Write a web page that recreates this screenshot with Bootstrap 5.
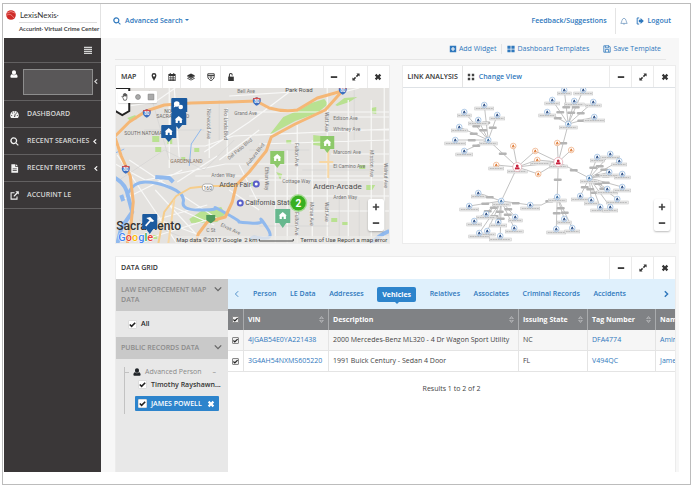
<!DOCTYPE html>
<html lang="en">
<head>
<meta charset="utf-8">
<meta name="viewport" content="width=device-width, initial-scale=1">
<title>Accurint Virtual Crime Center</title>
<link href="https://cdn.jsdelivr.net/npm/bootstrap@5.3.0/dist/css/bootstrap.min.css" rel="stylesheet">
<style>
body{font-family:"Open Sans",sans-serif;font-size:7px;line-height:10px;color:#444;background:#fff;min-height:100vh;padding:3px 4px 3px 2px}
a{color:#2f78bd;text-decoration:none}
button{background:none;border:0;padding:0;color:inherit}
svg{flex:none}
.ic{width:8px;height:8px;fill:currentColor;display:block}
.frame{border:1px solid #bcbcbc;padding:0 11px 12px 1px;flex:1}
.topbar{height:34px}
.brand{width:97px;border-right:1px solid #e2e2e2;padding:6px 0 0 2px}
.brand-name{font-family:Lato,sans-serif;font-size:8px;color:#333}
.brand-sub{font-family:Lato,sans-serif;font-size:6px;font-weight:700;color:#444;margin:2px 3px 0 13px;padding-top:1px;white-space:nowrap;border-top:1px solid #ddd}
.side{width:97px;background:#3a3738;color:#d5d5d5}
.side .item{border-bottom:1px solid #626061;height:27px;padding:0 5px 0 6px;gap:8px;color:#d5d5d5;font-weight:600;width:100%;white-space:nowrap}
.side .item .ic{width:9px;height:9px;color:#f2f2f2}
.side .ic.caret,.side .item .ic.caret{width:4px;height:5px;margin-left:auto}
.side .item .ic.caret{margin-left:-4px}
.side .item .ic.caret.far{margin-left:1px}
.side .menu-row{height:25px;padding:0 9px;border-bottom:1px solid #626061}
.side .user-row{height:38px;padding:0 3px 0 6px;border-bottom:1px solid #626061;gap:5px}
.side .user-row .ic.caret{margin-left:-4px}
.user-box{flex:1;height:26px;background:#595758;border:1px solid #8d8d8d}
.main{background:#f7f7f7;padding:0 3px 0 14px;min-width:0}
.tools{height:22px;border-bottom:1px solid #e6e6e6;margin-right:10px}
.tools a{padding:0 5px;gap:2px;font-size:7px}
.fw6{font-weight:600}
.bar-line{border-left:1px solid #e4e4e4}
.widgets{margin-top:5px}
.panel{background:#fff;border:1px solid #ececec}
.panel-head{height:22px;padding-left:5px;font-weight:600;color:#333}
.lower{margin-top:12px}
.cell{width:22px;border-left:1px solid #ebebeb;display:flex;align-items:center;justify-content:center}
.tool-cell{width:20px;border-left:1px solid #ebebeb;display:flex;align-items:center;justify-content:center}
.tool-cell.slim{width:18px}
.stage{height:155px;position:relative;overflow:hidden}
.stage>svg{width:100%;height:100%;display:block}
.zoomer{position:absolute;right:5px;bottom:12px;width:16px;background:#fff;border-radius:2px;box-shadow:0 1px 2px #0004;color:#444}
.zoomer button{height:16px;width:16px;display:flex;align-items:center;justify-content:center}
.drawbar{position:absolute;left:2px;top:3px;background:#fff;border-radius:1px;box-shadow:0 1px 1px #0002;color:#8a8a8a}
.drawbar button{width:13px;height:12px;display:flex;align-items:center;justify-content:center}
.grid-side{width:112px;background:#e8e8e8}
.sec{background:#c9c9c9;color:#8c8c8c;padding:6px 6px 6px 5px;font-weight:600;width:100%;text-align:left}
.cb.form-check-input{width:9px;height:9px;margin:0;border:1px solid #ccc;border-radius:1px;background-color:#fff;flex:none;float:none}
.cb.form-check-input:checked{background-color:#fff;border-color:#ddd;background-size:9px;background-image:url("data:image/svg+xml,%3csvg xmlns='http://www.w3.org/2000/svg' viewBox='0 0 10 10'%3e%3cpath fill='none' stroke='%23222' stroke-width='1.7' d='M2 5l2 2 4-4'/%3e%3c/svg%3e")}
.cb.tight.form-check-input{width:7px;height:7px;border-color:#888;background-size:7px;background-color:#eee}
.tree{border-left:1px solid #c2c2c2;margin:12px 9px 4px 8px;height:47px}
.tree-top{margin-top:-4px;height:10px;color:#888;padding-right:3px}
.tree-top::before{content:"";width:4px;border-top:1px solid #c2c2c2;margin-right:4px}
.leaf{margin-left:10px;padding:0 4px 0 3px;height:15px;gap:3px;color:#333;font-weight:600;white-space:nowrap}
.leaf.on{background:#2d84cc;color:#fff;border-radius:1px}
.tabs{background:#dff0fc;height:30px;padding:0 5px 0 5px}
.tabs a{font-weight:600}
.tabs .tab-on{background:#2d84cc;color:#fff;border-radius:2px;padding:3px 5px 2px;position:relative;font-weight:700}
.tab-on::after{content:"";position:absolute;left:50%;top:100%;margin-left:-2px;border:2px solid transparent;border-top-color:#2d84cc}
.tab-strip{flex:1;padding:0 36px 0 12px}
.rec{table-layout:fixed;width:530px;margin:0;border-collapse:separate;border-spacing:0}
.rec th,.rec td{height:21px;padding:0 4px;vertical-align:middle;white-space:nowrap;border-right:1px solid #e4e4e4;font-size:7px;line-height:10px}
.rec th{background:#808285;color:#fff;font-weight:700;border-right-color:#a9abad}
.rec td{border-bottom:1px solid #e4e4e4;color:#444}
.rec tr.odd td{background:#f6f6f6}
.c0{width:16px}.c1{width:85px}.c2{width:190px}.c3{width:69px}.c4{width:68px}
.sort{width:5px;height:7px;fill:#b4b6b8}
.maptxt{font-family:Roboto,sans-serif}
</style>
<script src="https://cdn.jsdelivr.net/npm/bootstrap@5.3.0/dist/js/bootstrap.bundle.min.js"></script>
</head>
<body class="d-flex flex-column">
<svg width="0" height="0" class="position-absolute" aria-hidden="true">
<symbol id="minus" viewBox="0 0 10 10"><path d="M1 4h8v2.200H1z"/></symbol>
<symbol id="plus" viewBox="0 0 10 10"><path d="M4 1h2v3h3v2H6v3H4V6H1V4h3z"/></symbol>
<symbol id="expand" viewBox="0 0 10 10"><path d="M5.500 .500h4v4L8.200 3.200 6.200 5.200 4.800 3.800 6.800 1.800zM4.500 9.500h-4v-4l1.300 1.300 2-2 1.400 1.400-2 2z"/></symbol>
<symbol id="times" viewBox="0 0 10 10"><path d="M1 3l2-2 2 2 2-2 2 2-2 2 2 2-2 2-2-2-2 2-2-2 2-2z"/></symbol>
<symbol id="user" viewBox="0 0 10 10"><path d="M5 .3c1.600 0 2.500 1.100 2.500 2.700S6.600 6 5 6 2.500 4.600 2.500 3 3.400.3 5 .3zM2.500 5.300C3.800 7 6.200 7 7.500 5.300 9 5.600 9.500 7 9.500 8.500c0 .7-.4 1.200-1.200 1.200H1.700C.9 9.700.5 9.200.5 8.500.5 7 1 5.600 2.500 5.300z"/></symbol>
<symbol id="search" viewBox="0 0 10 10"><path fill-rule="evenodd" d="M4.200.4a3.800 3.800 0 013 6.100l2.500 2.400-.9.9-2.500-2.500A3.800 3.800 0 114.200.4zm0 1.400a2.400 2.400 0 100 4.800 2.400 2.400 0 000-4.800z"/></symbol>
<symbol id="caretl" viewBox="0 0 5 6"><path d="M4 .3L1 3l3 2.700" fill="none" stroke="currentColor" stroke-width="1.500"/></symbol>
<symbol id="house" viewBox="0 0 10 10"><path d="M5 1l4.500 4h-1v4H6V6.500H4V9H1.500V5h-1z"/></symbol>
<symbol id="updown" viewBox="0 0 5 7"><path d="M2.500 0L5 3H0zM2.500 7L0 4h5zM2.500 1.200L1.500 2.400h2zM2.500 5.800l1-1.200h-2z" fill-rule="evenodd"/></symbol>
<symbol id="shield" viewBox="0 0 10 10"><path fill="#3d6fc0" d="M1 1c2 .6 2.500 0 4-.7 1.500.7 2 1.300 4 .7 1.500 4-.5 7-4 8.700C1.500 8 -.5 5 1 1z"/><path fill="#d8504c" d="M1.200 1c2 .6 2.300 0 3.800-.7C6.500 1 7 1.600 8.800 1l.4 1.700H.8z"/><text x="5" y="7" font-size="5" font-weight="700" fill="#fff" text-anchor="middle">80</text></symbol>
</svg>
<div class="frame d-flex flex-column">
  <header class="topbar d-flex">
    <div class="brand">
      <div class="d-flex align-items-center brand-name"><svg class="me-1" width="10" height="10" viewBox="0 0 10 10"><circle cx="5" cy="5" r="4.800" fill="#cf2a27"/><path d="M1 3Q5 0 9 3M.500 5.500Q4 2 8 8" stroke="#f3a09a" stroke-width=".7" fill="none"/></svg><span>LexisNexis<small>·</small></span></div>
      <div class="brand-sub">Accurint<small>·</small> Virtual Crime Center</div>
    </div>
    <div class="flex-grow-1 d-flex align-items-center justify-content-between ps-2 fw6">
      <a href="#" class="d-flex align-items-center gap-1 ms-1"><svg class="ic"><use href="#search"/></svg><span class="dropdown-toggle">Advanced Search</span></a>
      <div class="d-flex align-items-center align-self-stretch me-2">
        <a href="#" class="me-2">Feedback/Suggestions</a>
        <span class="bar-line d-block h-75 me-1"></span>
        <button type="button" aria-label="Alerts"><svg class="ic" viewBox="0 0 10 10"><path d="M1 8h8C7.500 6.500 8 2 5 1.500 2 2 2.500 6.500 1 8zM4 8.500q1 1.500 2 0" fill="none" stroke="#6a94bd" stroke-width=".9"/></svg></button>
        <a href="#" class="d-flex align-items-center gap-1 ms-2"><svg class="ic" viewBox="0 0 10 10"><path d="M4 1.200H1.500v7.600H4" fill="none" stroke="currentColor" stroke-width="1.200"/><path d="M3.500 3.500h2.200V1.200L9.800 5 5.700 8.800V6.500H3.500z"/></svg>Logout</a>
      </div>
    </div>
  </header>
  <div class="d-flex flex-grow-1">
    <nav class="side flex-shrink-0">
      <div class="menu-row d-flex align-items-center justify-content-end"><button type="button" aria-label="Menu"><svg class="ic" viewBox="0 0 10 10"><path d="M0 1h10v1.500H0zM0 3.500h10V5H0zM0 6h10v1.500H0zM0 8.500h10V10H0z"/></svg></button></div>
      <div class="user-row d-flex align-items-center"><svg class="ic mb-3 text-white"><use href="#user"/></svg><div class="user-box"></div><svg class="ic caret"><use href="#caretl"/></svg></div>
      <a href="#" class="item d-flex align-items-center"><svg class="ic" viewBox="0 0 10 10"><path fill-rule="evenodd" d="M1.300 9A4.800 4.800 0 01.2 6 4.800 4.800 0 019.800 6a4.800 4.800 0 01-1.100 3zM4.500 7.800h1.200L6.300 4l-.8-.2zM1.200 5.500v1h1.200v-1zM7.600 5.500v1h1.200v-1zM2.400 2.800v1h1v-1zM6.800 2.800v1h1v-1zM4.500 1.800v1h1v-1z"/></svg>DASHBOARD</a>
      <a href="#" class="item d-flex align-items-center"><svg class="ic"><use href="#search"/></svg>RECENT SEARCHES<svg class="ic caret"><use href="#caretl"/></svg></a>
      <a href="#" class="item d-flex align-items-center"><svg class="ic" viewBox="0 0 10 10"><path fill-rule="evenodd" d="M1.500.3h4.500v3h3v6.500H1.500zM6.700.3L9 2.600H6.700zM3 5h4.500v.8H3zM3 7h4.500v.8H3z"/></svg>RECENT REPORTS<svg class="ic caret far"><use href="#caretl"/></svg></a>
      <a href="#" class="item d-flex align-items-center"><svg class="ic" viewBox="0 0 10 10"><path d="M5 2H1.200v7h6.600V6" fill="none" stroke="currentColor" stroke-width="1.200"/><path d="M6 .3h3.800V4L8.500 2.800 4.800 6.500l-1-1 3.600-3.700z"/></svg>ACCURINT LE</a>
    </nav>
    <main class="main flex-grow-1 d-flex flex-column">
      <div class="tools d-flex align-items-center justify-content-end">
        <a href="#" class="d-flex align-items-center"><svg class="ic" viewBox="0 0 10 10"><path fill-rule="evenodd" d="M1 1h8v8H1zM4.300 2.500v1.800H2.500v1.400h1.800v1.800h1.400V5.700h1.800V4.300H5.700V2.500z"/></svg>Add Widget</a>
        <a href="#" class="d-flex align-items-center bar-line"><svg class="ic" viewBox="0 0 10 10"><path d="M.5 1h4v3.600h-4zM5.500 1h4v3.600h-4zM.5 5.500h4V9h-4zM5.500 5.500h4V9h-4z"/></svg>Dashboard Templates</a>
        <a href="#" class="d-flex align-items-center ms-1"><svg class="ic" viewBox="0 0 10 10"><path d="M1 1h6.500L9 2.500V9H1zM3 1v2.500h4V1M3 9V5.500h4V9" fill="none" stroke="currentColor"/></svg>Save Template</a>
      </div>
      <div class="row g-0 widgets">
        <section class="col">
          <div class="panel">
            <div class="panel-head d-flex align-items-stretch">
              <span class="align-self-center me-2">MAP</span>
              <button type="button" class="tool-cell slim" aria-label="Pin"><svg class="ic" viewBox="0 0 10 10"><path fill-rule="evenodd" d="M5 0a3 3 0 013 3.200C8 5.500 6 7.500 5 10 4 7.500 2 5.500 2 3.200A3 3 0 015 0zm0 1.800a1.400 1.400 0 100 2.800 1.400 1.400 0 000-2.800z"/></svg></button>
              <button type="button" class="tool-cell slim" aria-label="Dates"><svg class="ic" viewBox="0 0 10 10"><path fill-rule="evenodd" d="M.5 1.200h1.700V0h1.200v1.200h3.200V0h1.200v1.200h1.700V10h-9zM1.300 3.800V5.200h1.700V3.800zm2.300 0v1.400h1.200V3.800zm1.900 0v1.400h1.200V3.800zm1.900 0v1.400h1.300V3.800zM1.300 6v1.300H3V6zm2.300 0v1.300h1.200V6zm1.900 0v1.300h1.200V6zm1.900 0v1.300h1.300V6zM1.300 8v1.200H3V8zm2.300 0v1.200h1.200V8zm1.900 0v1.200h1.200V8zm1.900 0v1.200h1.300V8z"/></svg></button>
              <button type="button" class="tool-cell" aria-label="Layers"><svg class="ic" viewBox="0 0 10 10"><path d="M5 .5l5 2.700-5 2.700-5-2.700zM0 4.800l1-.6 4 2.200 4-2.200 1 .6-5 2.700zM0 6.800l1-.5 4 2.100 4-2.100 1 .5-5 2.700z"/></svg></button>
              <button type="button" class="tool-cell" aria-label="Routes"><svg class="ic" viewBox="0 0 10 10"><path d="M1 1h8v3.500C9 7 7 8.500 5 9.500 3 8.500 1 7 1 4.500zM1 3.200h8M3.200 5h3.600M4 6.600h2" fill="none" stroke="currentColor" stroke-width="1.200"/></svg></button>
              <button type="button" class="tool-cell" aria-label="Lock"><svg class="ic" viewBox="0 0 10 10"><path d="M1.500 4.500h7V10h-7z"/><path d="M3 5V2.500a1.700 1.700 0 013.500 0V3" fill="none" stroke="currentColor" stroke-width="1.300"/></svg></button>
              <button type="button" class="cell ms-auto" aria-label="Minimize"><svg class="ic"><use href="#minus"/></svg></button>
              <button type="button" class="cell" aria-label="Expand"><svg class="ic"><use href="#expand"/></svg></button>
              <button type="button" class="cell" aria-label="Close"><svg class="ic"><use href="#times"/></svg></button>
            </div>
            <div class="stage">
              <svg viewBox="116 88 274 155" preserveAspectRatio="xMidYMid slice" class="maptxt" role="img" aria-label="Map of Sacramento">
                <path fill="#e4e2df" d="M0 0h700v500H0z"/>
                <g fill="#b9e191"><path d="M270 135L284 117 300 110 312 103 325 99 329 104 318 113 296 121zM336 105l9-7 13-1-8 5-12 4zM190 219l12-8 20-4 4 7-8 8-26 1z"/><path d="M153 136h7v6h-7zM156 147h6v5h-6zM168 139h5v5h-5zM128 118l8-3 2 4-7 2zM182 157h4v3h-4zM372 108l5-1v7l-5-1zM314 135l8 1v10l-8-1zM343 222h6v3h-6zM367 185h9l-3 5h-6zM332 218h6v4h-6zM277 172l6 2-2 6zM252 182h7v4h-7zM195 148h5v4h-5zM360 165h6v4h-6zM287 140h5v4h-5zM150 235h8v4h-8z"/></g>
                <g fill="none" stroke="#f8f8f7" stroke-width="1.200"><path d="M116 108l40-6 20-14M116 146h90l28-10 156-7M170 88v80M210 108v50M228 108v50M230 96l80-5M240 112h150M260 144l130-4M205 152l45-30 40-30M220 160l40-30M116 164l30 16 80-16h164M196 176h194M260 180h130M250 196h140M310 211h80M276 165v79M288 150v94M298 125v119M313 140v104M328 88v156M349 100v144M372 100v144M385 88v156M345 117h45M335 130h55M332 154h58M178 182l40-26M130 160l90 60M118 155l60 89M170 205l45 20M160 220l40 15M183 170l-60 30M156 190l50 54M138 225l70-20M144 240l70-22M175 88l5 70M320 98l40-10M240 165l20 40M230 190l30 20"/></g>
                <g fill="none" stroke="#cfcfcf" stroke-width=".5"><path d="M120 180l45-30 40 20 30-30M140 220l50 20M220 100v40M250 150h60M355 90v50M303 170h70M340 196v40M260 226h70M360 200v44M145 130h60M150 90l20 70"/></g>
                <g fill="none" stroke="#90b9ee" stroke-linejoin="round" stroke-width="3"><path d="M116 178Q127 184 129 197L133 212 122 228 118 244" stroke-width="4"/><path d="M129 193Q134 182 146 182T172 188 184 202 200 210 216 208 228 214 240 222 251 223 262 220 268 228 262 238 254 240"/><path d="M156 177l14 1 4 4M122 195l2 6" stroke-width="4"/><path d="M190 166l2-22 10-15M116 153l9-4" stroke-width="1"/><path d="M390 231q-12 5-18 13" stroke-width="4"/></g>
                <g fill="none" stroke="#f5b776" stroke-linejoin="round" stroke-width="3"><path d="M116 136L130 122 147 111 165 105 192 103 230 102 257 101 270 108Q284 112 298 110L318 98 343 91"/><path d="M343 91L326 110 296 124 272 137 267 151 250 172 237 185 233 202 226 217 208 222 199 234 196 244"/><path d="M116 138l6 18 9 20 3 26-2 20-4 22"/><path d="M159 244l6-32 12-16 14-8 18-2 28 0" stroke="#f6cd8b" stroke-width="2"/><path d="M175 200l-6 44M320 162h14M329 150v28" stroke="#f7d7a4" stroke-width="2"/></g>
                <use href="#shield" x="143" y="109" width="9" height="9"/><use href="#shield" x="253" y="97" width="9" height="9"/><use href="#shield" x="339" y="86" width="9" height="9"/><use href="#shield" x="122" y="165" width="9" height="9"/>
                <path d="M207 215h9v5l-4.500 3.500L207 220z" fill="#4f9a5c"/>
                <rect x="203" y="184" width="11" height="7" rx="3" fill="#fff" stroke="#888" stroke-width=".6"/><text x="208.500" y="189.500" font-size="5" text-anchor="middle" fill="#555">160</text>
                <g font-size="5" fill="#777"><text x="238" y="93">Bell Ave</text><text x="235" y="115">Grand Ave</text><text x="334" y="120">Edison Ave</text><text x="334" y="131">Whitney Ave</text><text x="334" y="154">Marconi Ave</text><text x="334" y="168">El Camino Ave</text><text x="283" y="183">Cottage Way</text><text x="334" y="199">Arden Way</text><text x="212" y="177">Arden Way</text><text transform="translate(208 109) rotate(90)">Norwood Ave</text><text transform="translate(225 109) rotate(90)">Rio Linda Blvd</text><text transform="translate(326 112) rotate(90)">Watt Ave</text><text transform="translate(296 143) rotate(90)">Fulton Ave</text><text transform="translate(326 202) rotate(90)">Watt Ave</text><text transform="translate(311 202) rotate(90)">Morse Ave</text><text transform="translate(296 212) rotate(90)">Fulton Ave</text><text transform="translate(371 150) rotate(90)">Mission Ave</text><text transform="translate(385 163) rotate(90)">Walnut Ave</text><text transform="translate(266 167) rotate(90)">Ethan Way</text><text transform="translate(230 160) rotate(-40)">Del Paso Blvd</text><text transform="translate(249 166) rotate(-52)">Auburn Blvd</text><text transform="translate(221 226) rotate(25)">Elvas Ave</text><text x="207" y="232">C St</text></g>
                <g fill="#6c6a67" font-size="5"><text x="165" y="113">NORTH</text><text x="157" y="118">SACRAMENTO</text><text x="125" y="135">SOUTH NATOMAS</text><text x="171" y="163" fill="#8a7462">GARDENLAND</text></g>
                <g fill="#4d4d4d"><text x="286" y="92" font-size="6">Park Road</text><text x="220" y="187" font-size="7">Arden Fair</text><text x="246" y="205" font-size="7">California State</text><text x="314" y="189" font-size="8">Arden-Arcade</text><text x="117" y="230" font-size="12" font-weight="500" fill="#333">Sacramento</text></g>
                <g fill="#fff" stroke="#5960c9" stroke-width="2"><circle cx="257" cy="184" r="2.500"/><circle cx="241" cy="203" r="2.500"/></g>
                <path d="M112 88h18v23l-7 4-7-4z" fill="#fff" stroke="#222" stroke-width="2"/>
                <g fill="#1b5a9f"><path d="M173 98h14q1 0 1 1v13h-4l-4 3-4-3h-4V99q0-1 1-1zM173 112h13q1 0 1 1v12h-4l-3.500 4-3.500-4h-4v-12zM163 125h13q1 0 1 1v12h-4l-3.500 4-3.500-4h-4v-12q0-1 1-1zM144 214h13q1 0 1 1v14h-4l-3.500 5-3.500-5h-4v-14q0-1 1-1z"/></g>
                <g fill="#fff"><circle cx="177.500" cy="104" r="2.800"/><path d="M175 105l-.500 2.500 2-1z"/><circle cx="181.500" cy="107" r="2.300"/><use href="#house" x="175" y="115" width="9" height="9"/><use href="#house" x="165" y="127" width="9" height="9"/><path d="M147 218l4-1 4 4-2 1-1.500-.5-4.500 5-1.200-1.200 4.500-5z"/></g>
                <g><path fill="#8dc96a" d="M271 151h14v13h-4l-3 4-3-4h-4zM321 136h14v13h-4l-3 4-3-4h-4z"/><path fill="#67b88e" d="M276 209h15v14h-4l-3.500 5-3.500-5h-4z"/><g fill="#fff"><use href="#house" x="273.500" y="153" width="9" height="9"/><use href="#house" x="323.500" y="138" width="9" height="9"/><use href="#house" x="279" y="211" width="9" height="9"/></g></g>
                <circle cx="299" cy="203" r="9" fill="#79d25b" opacity=".6"/><circle cx="299" cy="203" r="7.500" fill="#39b01f"/><text x="299" y="207" fill="#fff" font-size="10" font-weight="700" text-anchor="middle">2</text>
                <path fill="#ecebe8" opacity=".75" d="M176 236h214v8H176z"/>
                <g font-size="6" fill="#444"><text x="177" y="242">Map data ©2017 Google</text><text x="245" y="242">2 km</text><text x="301" y="242">Terms of Use</text><text x="338" y="242">Report a map error</text></g>
                <path d="M260 239v2h34v-2" fill="none" stroke="#444"/>
                <text x="119" y="241" font-size="11" font-weight="500" stroke="#fff" stroke-width="1" paint-order="stroke"><tspan fill="#4285f4">G</tspan><tspan fill="#ea4335">o</tspan><tspan fill="#fbbc05">o</tspan><tspan fill="#4285f4">g</tspan><tspan fill="#34a853">l</tspan><tspan fill="#ea4335">e</tspan></text>
              </svg>
              <div class="drawbar d-flex">
                <button type="button" aria-label="Pan"><svg class="ic" viewBox="0 0 10 10"><path d="M2.500 6L1 4.500 2 4l1 1V1.500h1V4 .7h1.200V4 1h1.100v3.200V2h1.100v4.500L6.500 9h-3z" fill="none" stroke="#333" stroke-width=".8"/></svg></button>
                <button type="button" aria-label="Circle"><svg class="ic" viewBox="0 0 10 10"><circle cx="5" cy="5" r="3" fill="#aaa" stroke="#888"/></svg></button>
                <button type="button" aria-label="Rectangle"><svg class="ic" viewBox="0 0 10 10"><path d="M1.500 1.500h7v7h-7z" fill="#aaa" stroke="#888"/></svg></button>
              </div>
              <div class="zoomer"><button type="button" aria-label="Zoom in"><svg class="ic"><use href="#plus"/></svg></button><button type="button" aria-label="Zoom out"><svg class="ic"><use href="#minus"/></svg></button></div>
            </div>
          </div>
        </section>
        <section class="col ms-2 ps-1">
          <div class="panel">
            <div class="panel-head d-flex align-items-stretch border-bottom">
              <span class="align-self-center">LINK ANALYSIS</span>
              <a href="#" class="d-flex align-items-center gap-1 bar-line ms-1 ps-1"><svg class="ic" viewBox="0 0 10 10"><g fill="#444"><path d="M1 1h3v3H1zM6 1h3v3H6zM1 6h3v3H1zM6 6h3v3H6z"/></g></svg>Change View</a>
              <button type="button" class="cell ms-auto" aria-label="Minimize"><svg class="ic"><use href="#minus"/></svg></button>
              <button type="button" class="cell" aria-label="Expand"><svg class="ic"><use href="#expand"/></svg></button>
              <button type="button" class="cell" aria-label="Close"><svg class="ic"><use href="#times"/></svg></button>
            </div>
            <div class="stage">
              <svg id="graph" viewBox="402 88 274 155" preserveAspectRatio="xMidYMid slice" role="img" aria-label="Link analysis graph"></svg>
              <div class="zoomer"><button type="button" aria-label="Zoom in"><svg class="ic"><use href="#plus"/></svg></button><button type="button" aria-label="Zoom out"><svg class="ic"><use href="#minus"/></svg></button></div>
            </div>
          </div>
        </section>
      </div>
      <section class="panel lower flex-grow-1 d-flex flex-column border-bottom-0">
        <div class="panel-head d-flex align-items-stretch">
          <span class="align-self-center">DATA GRID</span>
          <button type="button" class="cell ms-auto" aria-label="Minimize"><svg class="ic"><use href="#minus"/></svg></button>
          <button type="button" class="cell" aria-label="Expand"><svg class="ic"><use href="#expand"/></svg></button>
          <button type="button" class="cell" aria-label="Close"><svg class="ic"><use href="#times"/></svg></button>
        </div>
        <div class="d-flex flex-grow-1">
          <div class="grid-side flex-shrink-0">
            <button type="button" class="sec d-flex justify-content-between"><span>LAW ENFORCEMENT MAP<br>DATA</span><svg class="ic" viewBox="0 0 10 10"><path d="M1 3l4 4 4-4" fill="none" stroke="#666" stroke-width="1.600"/></svg></button>
            <label class="d-flex align-items-center gap-1 fw6 text-dark ps-2 ms-1 py-2"><input type="checkbox" class="form-check-input cb" checked>All</label>
            <button type="button" class="sec d-flex justify-content-between"><span>PUBLIC RECORDS DATA</span><svg class="ic" viewBox="0 0 10 10"><path d="M1 3l4 4 4-4" fill="none" stroke="#666" stroke-width="1.600"/></svg></button>
            <div class="tree">
              <div class="tree-top d-flex align-items-center"><svg class="ic text-dark me-1"><use href="#user"/></svg><span>Advanced Person</span><span class="ms-auto">–</span></div>
              <label class="leaf d-flex align-items-center gap-1"><input type="checkbox" class="form-check-input cb" checked>Timothy Rayshawn...</label>
              <div class="leaf on d-flex align-items-center mt-1"><label class="d-flex align-items-center gap-1"><input type="checkbox" class="form-check-input cb" checked>JAMES POWELL</label><button type="button" class="ms-auto" aria-label="Remove"><svg class="ic"><use href="#times"/></svg></button></div>
            </div>
          </div>
          <div class="flex-grow-1 overflow-hidden" id="results">
            <nav class="tabs d-flex align-items-center">
              <a href="#" aria-label="Previous tabs"><svg class="ic" viewBox="0 0 10 10"><path d="M6.500 1.500L3 5l3.500 3.500" fill="none" stroke="currentColor"/></svg></a>
              <div class="tab-strip d-flex align-items-center justify-content-between">
                <a href="#">Person</a><a href="#">LE Data</a><a href="#">Addresses</a><a href="#" class="tab-on">Vehicles</a><a href="#">Relatives</a><a href="#">Associates</a><a href="#">Criminal Records</a><a href="#">Accidents</a>
              </div>
              <a href="#" aria-label="Next tabs"><svg class="ic" viewBox="0 0 10 10"><path d="M3.500 1.500L7 5 3.500 8.500" fill="none" stroke="currentColor" stroke-width="1.800"/></svg></a>
            </nav>
            <table class="rec">
              <thead><tr><th class="c0"><input type="checkbox" class="form-check-input cb tight d-block" aria-label="Select all" checked></th>
              <th class="c1"><div class="d-flex justify-content-between align-items-center">VIN<svg class="sort"><use href="#updown"/></svg></div></th>
              <th class="c2"><div class="d-flex justify-content-between align-items-center">Description<svg class="sort"><use href="#updown"/></svg></div></th>
              <th class="c3"><div class="d-flex justify-content-between align-items-center">Issuing State<svg class="sort"><use href="#updown"/></svg></div></th>
              <th class="c4"><div class="d-flex justify-content-between align-items-center">Tag Number<svg class="sort"><use href="#updown"/></svg></div></th>
              <th>Name</th></tr></thead>
              <tbody>
              <tr class="odd"><td><input type="checkbox" class="form-check-input cb tight d-block" aria-label="Select row 1" checked></td><td><a href="#">4JGAB54E0YA221438</a></td><td>2000 Mercedes-Benz ML320 - 4 Dr Wagon Sport Utility</td><td>NC</td><td><a href="#">DFA4774</a></td><td><a href="#">Amin</a></td></tr>
              <tr><td><input type="checkbox" class="form-check-input cb tight d-block" aria-label="Select row 2" checked></td><td><a href="#">3G4AH54NXMS605220</a></td><td>1991 Buick Century - Sedan 4 Door</td><td>FL</td><td><a href="#">V494QC</a></td><td><a href="#">James</a></td></tr>
              </tbody>
            </table>
            <p class="text-center m-0 pt-2 mt-1">Results 1 to 2 of 2</p>
          </div>
        </div>
      </section>
    </main>
  </div>
</div>
<script>
const hubs = [
  {at:[488,140], nodes:[[464,112],[484,105],[497,115],[478,120],[459,127],[455,140],[464,151]]},
  {at:[501,201], nodes:[[478,193],[469,206],[474,221],[486,214],[487,231],[479,233],[498,222],[500,236],[514,228],[515,217],[530,205]]},
  {at:[568,124], nodes:[[564,90],[583,90],[552,100],[574,101],[593,102],[594,117],[547,112]]},
  {at:[589,178], nodes:[[597,157],[610,154],[619,161],[609,172],[622,174],[607,189],[622,187],[617,199],[580,196],[591,200],[600,207],[610,207]]},
  {at:[557,197], nodes:[[564,219],[556,229],[572,228],[541,205]]}
];
const left = [517,167], right = [558,162];
const orange = [[513,146,0],[496,165,0],[535,151,2],[537,160,2],[538,174,2],[557,143,1],[571,150,1]];
const line = (a,b) => `<path d="M${a[0]} ${a[1]}L${b[0]} ${b[1]}" stroke="#b3b3b3" stroke-width=".8"/>`;
const pill = (a,b) => `<rect x="${(a[0]+b[0])/2-4}" y="${(a[1]+b[1])/2-1}" width="8" height="2.500" rx="1" fill="#b4b4b4"/>`;
const label = (p,w) => `<rect x="${p[0]-w/2}" y="${p[1]+2}" width="${w}" height="3" fill="#ececec" stroke="#c2c2c2" stroke-width=".5"/><path d="M${p[0]-w/2+1} ${p[1]+3.5}h${w-2}" stroke="#b0b0b0" stroke-width=".8" stroke-dasharray="2 .5"/>`;
const person = (p,r,c,s) => `<circle cx="${p[0]}" cy="${p[1]}" r="${r}" fill="#fff" stroke="${s}" stroke-width=".7"/><g fill="${c}"><use href="#user" x="${p[0]-r*.6}" y="${p[1]-r*.6}" width="${r*1.2}" height="${r*1.2}"/></g>`;
let edges = '', pills = '', dots = '';
hubs.forEach((h,i) => {
  const c = i < 2 ? left : right;
  edges += line(c,h.at);
  if (i !== 1) pills += pill(c,h.at);
  h.nodes.forEach((n,j) => { edges += line(h.at,n); pills += pill(h.at,n); if (i !== 4 || j < 3) dots += label(n, 14 + (j*5)%9) + person(n,2.8,'#2c4f86','#8fb4dd'); });
  dots += label(h.at,18) + person(h.at,2.8,'#3a6ea5','#8fb4dd');
});
edges += line([530,205],[541,205]) + line(left,right);
orange.forEach(o => {
  if (o[2] !== 1) edges += line(left,o);
  if (o[2] !== 0) edges += line(right,o);
  dots += person(o,2.8,'#e07b35','#eda87a');
});
dots += label([496,165],15) + label([540,160],20) + label([left[0],left[1]+1],20) + label([right[0],right[1]+1],18) + person(left,4.5,'#c8203c','#e3a3ad') + person(right,4.5,'#c8203c','#e3a3ad');
document.getElementById('graph').innerHTML = `<g fill="none">${edges}</g>${pills}${dots}`;
</script>
</body>
</html>
